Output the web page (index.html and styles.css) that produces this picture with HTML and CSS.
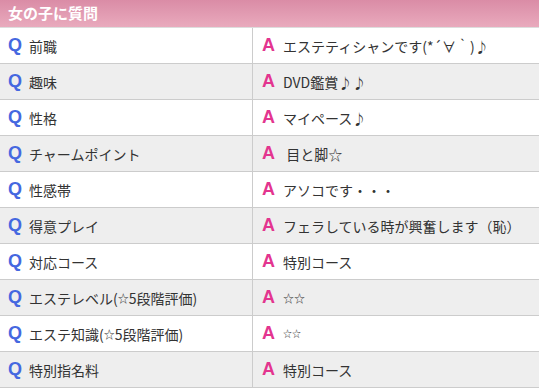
FILE: index.html
```html
<!DOCTYPE html>
<html lang="ja">
<head>
<meta charset="utf-8">
<link rel="stylesheet" href="styles.css">
</head>
<body>
<div class="panel">
  <h2 class="title">女の子に質問</h2>
  <div class="qa">
    <div class="row"><div class="cell q"><span class="mark">Q</span>前職</div><div class="cell a"><span class="mark">A</span>エステティシャンです(*´∀｀)♪</div></div>
    <div class="row"><div class="cell q"><span class="mark">Q</span>趣味</div><div class="cell a"><span class="mark">A</span>DVD鑑賞♪♪</div></div>
    <div class="row"><div class="cell q"><span class="mark">Q</span>性格</div><div class="cell a"><span class="mark">A</span>マイペース♪</div></div>
    <div class="row"><div class="cell q"><span class="mark">Q</span>チャームポイント</div><div class="cell a"><span class="mark">A</span><span class="pre"> 目と脚☆</span></div></div>
    <div class="row"><div class="cell q"><span class="mark">Q</span>性感帯</div><div class="cell a"><span class="mark">A</span>アソコです・・・</div></div>
    <div class="row"><div class="cell q"><span class="mark">Q</span>得意プレイ</div><div class="cell a"><span class="mark">A</span>フェラしている時が興奮します（恥）</div></div>
    <div class="row"><div class="cell q"><span class="mark">Q</span>対応コース</div><div class="cell a"><span class="mark">A</span>特別コース</div></div>
    <div class="row"><div class="cell q"><span class="mark">Q</span>エステレベル(<span class="small">☆</span>5段階評価)</div><div class="cell a"><span class="mark">A</span><span class="small">☆☆</span></div></div>
    <div class="row"><div class="cell q"><span class="mark">Q</span>エステ知識(<span class="small">☆</span>5段階評価)</div><div class="cell a"><span class="mark">A</span><span class="tiny">☆☆</span></div></div>
    <div class="row"><div class="cell q"><span class="mark">Q</span>特別指名料</div><div class="cell a"><span class="mark">A</span>特別コース</div></div>
  </div>
</div>
</body>
</html>
```

FILE: styles.css
```css
html, body {
  margin: 0;
  padding: 0;
  background: #fff;
}
body {
  font-family: "Noto Sans CJK JP", "Noto Sans", sans-serif;
  color: #333;
  width: 539px;
  overflow: hidden;
}
.title {
  margin: 0;
  height: 28px;
  line-height: 26px;
  padding-left: 8px;
  font-size: 15px;
  font-weight: bold;
  color: #fff;
  background: linear-gradient(#da8ca6, #e9aabd);
  border-bottom: 1px solid #ddd;
  box-sizing: border-box;
}
.qa {
  display: flex;
  flex-direction: column;
}
.row {
  display: grid;
  grid-template-columns: 253px 1fr;
  height: 36px;
  border-bottom: 1px solid #ccc;
  box-sizing: border-box;
}
.row:nth-child(even) {
  background: #eee;
}
.cell {
  display: flex;
  align-items: center;
  font-size: 14px;
  white-space: nowrap;
}
.cell.q {
  padding-left: 8px;
  border-right: 1px solid #ccc;
}
.cell.a {
  padding-left: 9px;
}
.pre { white-space: pre; }
.mark {
  font-family: "Liberation Sans", Arial, sans-serif;
  font-weight: bold;
  font-size: 18px;
  width: 21px;
  flex: none;
}
.q .mark { color: #4568e0; }
.a .mark { color: #e3358f; }
.small { font-size: 11px; }
.tiny { font-size: 9px; }
```
